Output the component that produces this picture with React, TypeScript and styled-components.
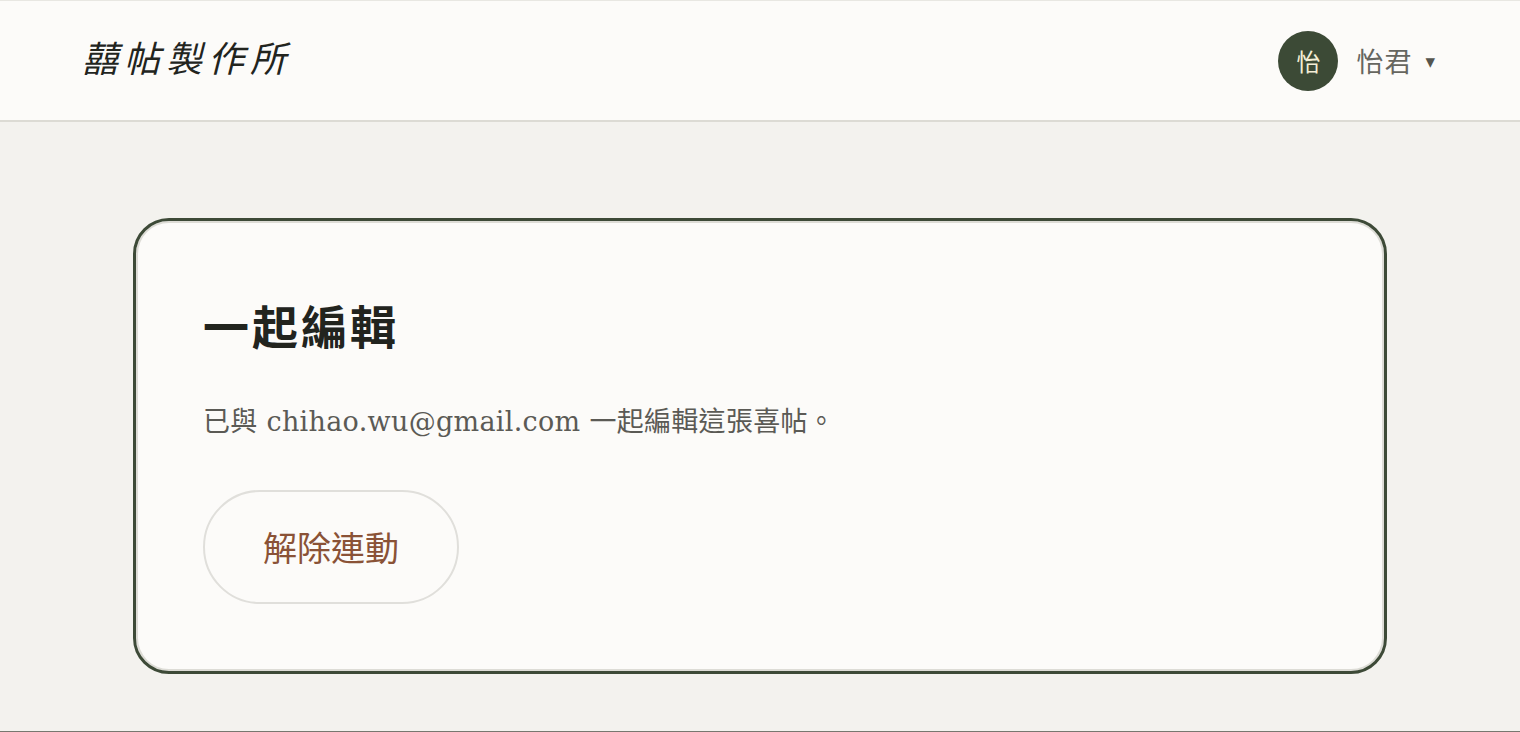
import styled, { createGlobalStyle } from "styled-components";

const GlobalStyle = createGlobalStyle`
    html, body {
        margin: 0;
        padding: 0;
        background: #f3f2ee;
    }
    body {
        font-family: "Liberation Serif", "Noto Sans CJK TC", serif;
        color: #2b2b26;
    }
`

type CollaboratorProps = {
    email: string
}

const Header = () => {
    return (
        <StyledHeader>
            <Logo>囍帖製作所</Logo>
            <UserMenu>
                <Avatar>怡</Avatar>
                <UserName>怡君</UserName>
                <Caret>▾</Caret>
            </UserMenu>
        </StyledHeader>
    );
};

const CollaboratorCard = (props: CollaboratorProps) => {
    return (
        <Card>
            <Title>一起編輯</Title>
            <Text>已與 {props.email} 一起編輯這張喜帖。</Text>
            <UnlinkButton>解除連動</UnlinkButton>
        </Card>
    );
};

export default function App() {
    return (
        <>
            <GlobalStyle />
            <Page>
                <Header />
                <Main>
                    <CollaboratorCard email="chihao.wu@gmail.com" />
                </Main>
            </Page>
        </>
    );
}

const Page = styled.div`
    min-height: 732px;
    display: flex;
    flex-direction: column;
    box-sizing: border-box;
    border-bottom: 1px solid #77776f;
`
const StyledHeader = styled.header`
    height: 122px;
    box-sizing: border-box;
    display: flex;
    align-items: center;
    justify-content: space-between;
    padding: 0 85px 0 82px;
    background: #fcfbf9;
    border-top: 1px solid #e8e7e2;
    border-bottom: 2px solid #dcdbd4;
`
const Logo = styled.div`
    font-family: "Noto Sans CJK TC", sans-serif;
    font-style: italic;
    font-size: 36px;
    letter-spacing: 6px;
    color: #22241e;
    margin-top: -10px;
`
const UserMenu = styled.div`
    display: flex;
    align-items: center;
`
const Avatar = styled.div`
    width: 60px;
    height: 60px;
    border-radius: 50%;
    background: #3c4a36;
    color: #f4eed6;
    font-family: "Noto Sans CJK TC", sans-serif;
    font-size: 24px;
    display: flex;
    align-items: center;
    justify-content: center;
`
const UserName = styled.span`
    font-family: "Noto Sans CJK TC", sans-serif;
    font-size: 27px;
    letter-spacing: 1px;
    color: #66665f;
    margin-left: 18px;
`
const Caret = styled.span`
    font-family: "DejaVu Sans", sans-serif;
    font-size: 19px;
    color: #55554f;
    margin-left: 13px;
`
const Main = styled.main`
    flex: 1;
    padding: 96px 133px 57px;
`
const Card = styled.section`
    background: #fcfbf9;
    border: 3px solid #3d4a37;
    border-radius: 36px;
    box-shadow: inset 0 0 0 2px #dddcd6;
    padding: 78px 67px 0;
    height: 456px;
    box-sizing: border-box;
`
const Title = styled.h2`
    margin: 0;
    font-family: "Liberation Serif", "Noto Sans CJK TC", serif;
    font-weight: 700;
    font-size: 46px;
    letter-spacing: 3px;
    line-height: 1.3;
    color: #22241e;
`
const Text = styled.p`
    margin: 45px 0 0;
    font-family: "DejaVu Serif", "Noto Sans CJK TC", serif;
    font-size: 27px;
    letter-spacing: 0.3px;
    line-height: 1.3;
    color: #5b5a55;
`
const UnlinkButton = styled.button`
    margin-top: 51px;
    width: 256px;
    height: 114px;
    border-radius: 57px;
    border: 2px solid #e0dfdb;
    background: #fcfbf9;
    font-family: "Liberation Serif", "Noto Sans CJK TC", serif;
    font-size: 34px;
    color: #8a5236;
    cursor: pointer;
`
